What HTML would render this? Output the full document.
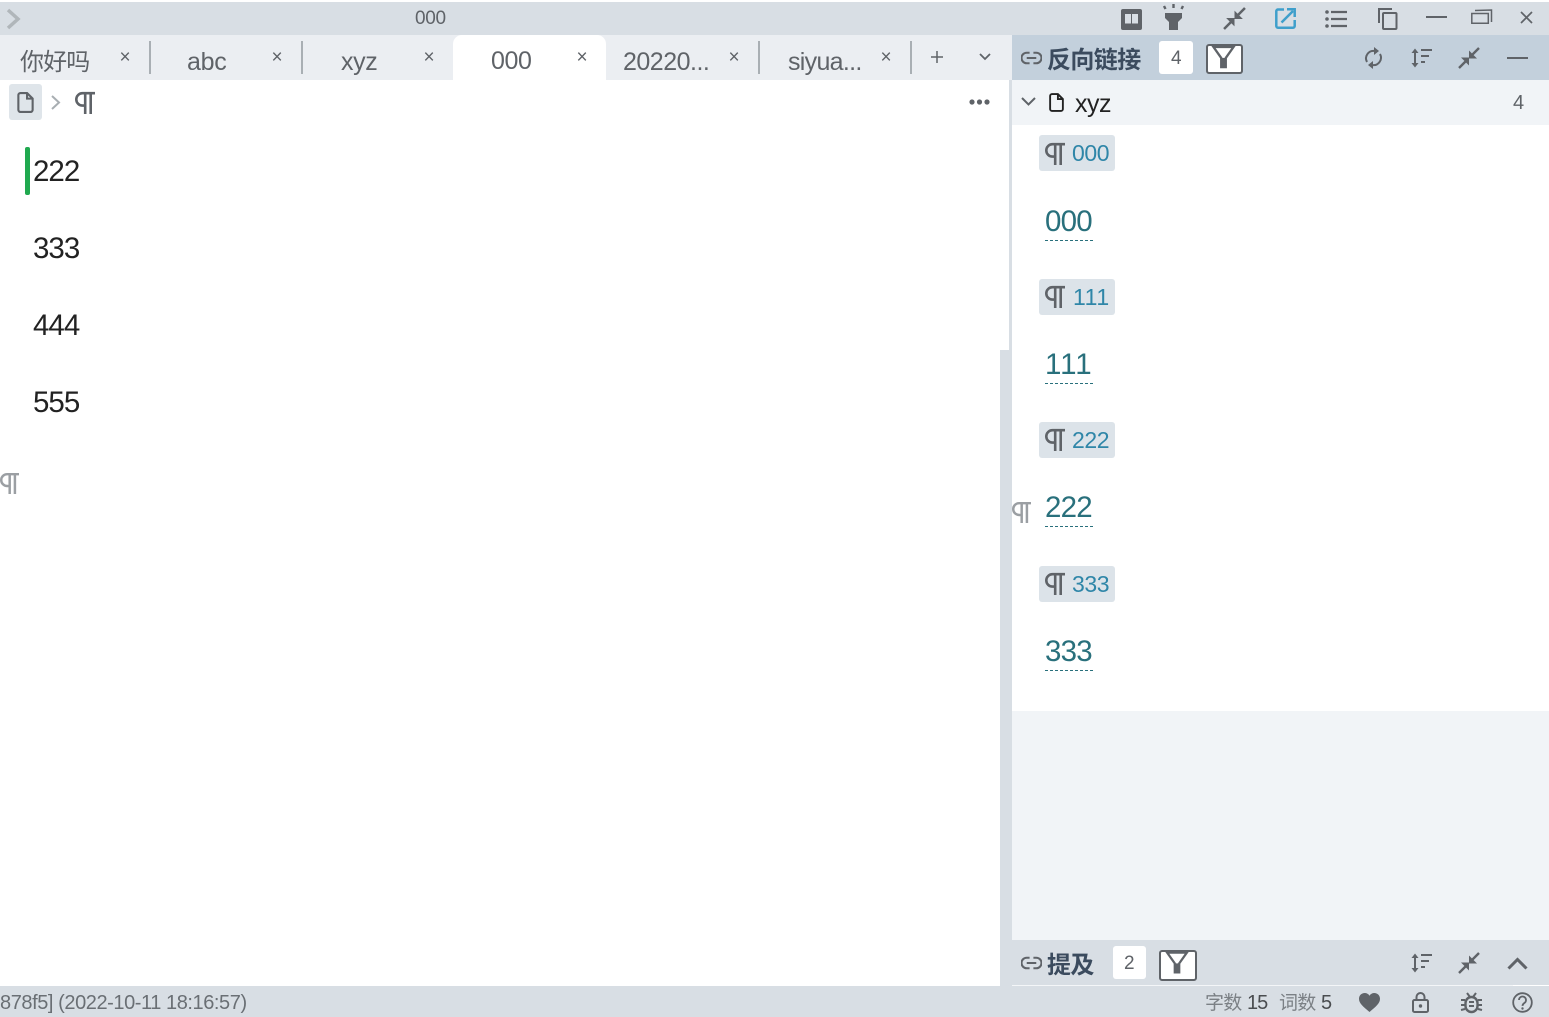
<!DOCTYPE html>
<html><head><meta charset="utf-8"><style>
html,body{margin:0;padding:0;width:1549px;height:1017px;overflow:hidden;background:#fff}
body{position:relative;font-family:"Liberation Sans","Noto Sans CJK SC",sans-serif;color:#5f6368}
.a{position:absolute}
.t{position:absolute;white-space:nowrap;line-height:1}
svg.i{position:absolute;overflow:visible}
.x{position:absolute;font-size:19px;line-height:1;color:#5f6368;width:16px;text-align:center}
.sep{position:absolute;top:41px;width:2px;height:33px;background:#a9afb4}
.chip{position:absolute;left:1039px;width:76px;height:36px;background:#dce3e9;border-radius:3px}
.ct{position:absolute;left:1072px;font-size:23px;line-height:1;color:#2f86a8;white-space:nowrap;letter-spacing:-.4px}
.lk{position:absolute;left:1045px;width:48px;font-size:29.500px;line-height:1;color:#29707c;white-space:nowrap;letter-spacing:-.8px;height:33px;border-bottom:1px dashed #29707c}
.d{position:absolute;left:33px;font-size:29.500px;line-height:1;color:#222;letter-spacing:-1px}
.tab{position:absolute;font-size:25px;line-height:1;white-space:nowrap;color:#5f6368}
</style></head><body>
<svg width="0" height="0" style="position:absolute"><defs>
<symbol id="p" viewBox="0 0 20 24"><path d="M20 2.200H7.500a6.200 6.200 0 0 0 0 12.400H10M10.200 2.200V23M15.700 2.200V23" fill="none" stroke="currentColor" stroke-width="2.600"/></symbol>
<symbol id="cmp" viewBox="0 0 22 22"><path d="M1 21 8 14M21 1l-7 7" fill="none" stroke="currentColor" stroke-width="2.400"/><path d="M3 10.500h8v8zM19 11.500h-8v-8z" fill="currentColor"/></symbol>
<symbol id="srt" viewBox="0 0 22 20"><path d="M4 3v14" fill="none" stroke="currentColor" stroke-width="2"/><path d="M0.500 5 4 0.500 7.500 5zM0.500 15 4 19.500 7.500 15z" fill="currentColor"/><path d="M10 2h11M10 8h8M10 14h4" fill="none" stroke="currentColor" stroke-width="2"/></symbol>
<symbol id="flt" viewBox="0 0 36 28"><path d="M7 3h22L20.500 15v10h-5V15z" fill="none" stroke="#5f6368" stroke-width="2.500"/><path d="M15.500 15h5v10h-5z" fill="#5f6368"/></symbol>
<symbol id="lnk" viewBox="0 0 22 14"><path d="M9 1.500H6a5.500 5.500 0 0 0 0 11h3M13 1.500h3a5.500 5.500 0 0 1 0 11h-3M6 7h10" fill="none" stroke="currentColor" stroke-width="2.200"/></symbol>
<symbol id="doc" viewBox="0 0 16 20"><path d="M1.200 3a2 2 0 0 1 2-2h6.300l5.300 5.300V17a2 2 0 0 1-2 2H3.200a2 2 0 0 1-2-2zM9.500 1v5.300h5.300" fill="none" stroke="currentColor" stroke-width="2"/></symbol>
</defs></svg>

<!-- titlebar -->
<div class="a" style="left:0;top:2px;width:1549px;height:33px;background:#d8dee4"></div>
<svg class="i" style="left:6px;top:8px" width="16" height="22"><path d="M2 2 12 11 2 20" fill="none" stroke="#b0b6ba" stroke-width="3.500"/></svg>
<div class="t" style="left:415px;top:9px;font-size:19px;letter-spacing:-.3px">000</div>

<!-- tabs -->
<div class="a" style="left:0;top:35px;width:1012px;height:45px;background:#ebeef2"></div>
<div class="a" style="left:453px;top:35px;width:153px;height:45px;background:#fff;border-radius:9px 9px 0 0"></div>
<div class="tab" style="left:20px;top:51px;font-size:24px;letter-spacing:-.9px">你好吗</div>
<div class="x" style="left:117px;top:48px">×</div><div class="sep" style="left:149px"></div>
<div class="tab" style="left:187px;top:50px;letter-spacing:-.3px">abc</div>
<div class="x" style="left:269px;top:48px">×</div><div class="sep" style="left:301px"></div>
<div class="tab" style="left:341px;top:50px;letter-spacing:-.4px">xyz</div>
<div class="x" style="left:421px;top:48px">×</div>
<div class="tab" style="left:491px;top:49px;letter-spacing:-.4px">000</div>
<div class="x" style="left:574px;top:48px">×</div>
<div class="tab" style="left:623px;top:50px;letter-spacing:-.5px">20220...</div>
<div class="x" style="left:726px;top:48px">×</div><div class="sep" style="left:758px"></div>
<div class="tab" style="left:788px;top:50px;letter-spacing:-.7px">siyua...</div>
<div class="x" style="left:878px;top:48px">×</div><div class="sep" style="left:910px"></div>
<svg class="i" style="left:931px;top:51px" width="12" height="12"><path d="M6 0v12M0 6h12" stroke="#5f6368" stroke-width="1.500"/></svg>
<svg class="i" style="left:979px;top:53px" width="12" height="8"><path d="M1 1l5 5 5-5" fill="none" stroke="#5f6368" stroke-width="1.800"/></svg>

<!-- breadcrumb -->
<div class="a" style="left:9px;top:84px;width:33px;height:36px;background:#dfe5ea;border-radius:3px"></div>
<svg class="i" style="left:17px;top:92px;color:#5f6368" width="17" height="21"><use href="#doc"/></svg>
<svg class="i" style="left:51px;top:95px" width="10" height="15"><path d="M1 1l7 6.500-7 6.500" fill="none" stroke="#a8aeb2" stroke-width="2"/></svg>
<svg class="i" style="left:75px;top:91px;color:#5f6368" width="20" height="24"><use href="#p"/></svg>
<svg class="i" style="left:969px;top:99px" width="22" height="6"><circle cx="3" cy="3" r="2.600" fill="#5f6368"/><circle cx="10.500" cy="3" r="2.600" fill="#5f6368"/><circle cx="18" cy="3" r="2.600" fill="#5f6368"/></svg>

<!-- editor -->
<div class="a" style="left:25px;top:147px;width:5px;height:48px;background:#20a94f;border-radius:2px"></div>
<div class="d" style="top:157px">222</div>
<div class="d" style="top:234px">333</div>
<div class="d" style="top:311px">444</div>
<div class="d" style="top:388px">555</div>
<svg class="i" style="left:0;top:472px;color:#9b9fa3" width="19" height="23"><use href="#p"/></svg>

<!-- scroll & separator -->
<div class="a" style="left:1009px;top:80px;width:3px;height:270px;background:#d8dee4"></div>
<div class="a" style="left:1000px;top:350px;width:12px;height:636px;background:#d8dee4"></div>

<!-- title icons -->
<svg class="i" style="left:1121px;top:9px" width="21" height="21"><rect width="21" height="21" rx="2" fill="#5f6368"/><path d="M4 5h6v9.500H4zM11 5h6v9.500h-6z" fill="#d8dee4"/></svg>
<svg class="i" style="left:1162px;top:4px" width="23" height="27"><path d="M3 9h17v5l-4 4v8H7v-8l-4-4z" fill="#5f6368"/><path d="M11.500 0v4M2 2l1.500 3M21 2l-1.500 3" stroke="#5f6368" stroke-width="2.400" fill="none"/></svg>
<svg class="i" style="left:1223px;top:7px;color:#5f6368" width="23" height="23"><use href="#cmp"/></svg>
<svg class="i" style="left:1275px;top:8px" width="21" height="21"><path d="M9 1.500H3A1.700 1.700 0 0 0 1.300 3v15A1.700 1.700 0 0 0 3 19.700h15a1.700 1.700 0 0 0 1.700-1.700v-6" fill="none" stroke="#3f9fcb" stroke-width="2.500"/><path d="M6.500 14.500 18 3M12 1.300h7.700V9" fill="none" stroke="#3f9fcb" stroke-width="2.500"/></svg>
<svg class="i" style="left:1325px;top:10px" width="22" height="18"><path d="M6 2h16M6 9h16M6 16h16" stroke="#5f6368" stroke-width="2.200"/><circle cx="2" cy="2" r="1.800" fill="#5f6368"/><circle cx="2" cy="9" r="1.800" fill="#5f6368"/><circle cx="2" cy="16" r="1.800" fill="#5f6368"/></svg>
<svg class="i" style="left:1378px;top:8px" width="20" height="22"><path d="M1 15V1h13" fill="none" stroke="#5f6368" stroke-width="2"/><rect x="5" y="5" width="13.500" height="16" rx="1" fill="none" stroke="#5f6368" stroke-width="2"/></svg>
<div class="a" style="left:1426px;top:16px;width:21px;height:2px;background:#5f6368"></div>
<svg class="i" style="left:1471px;top:9px" width="21" height="16"><path d="M4 1.500 20.500 1v12M.8 4.500h16.500v9.800H.8z" fill="none" stroke="#5f6368" stroke-width="1.500"/></svg>
<svg class="i" style="left:1520px;top:11px" width="13" height="13"><path d="M1 1l11 11M12 1 1 12" stroke="#5f6368" stroke-width="1.700"/></svg>

<!-- backlink header -->
<div class="a" style="left:1012px;top:35px;width:537px;height:45px;background:#c3d0dc"></div>
<svg class="i" style="left:1021px;top:51px;color:#5f6368" width="21" height="14"><use href="#lnk"/></svg>
<div class="t" style="left:1047px;top:46px;font-size:24px;font-weight:700;color:#3b4b5e;letter-spacing:-.6px;font-family:'Noto Sans CJK SC',sans-serif">反向链接</div>
<div class="a" style="left:1159px;top:41px;width:34px;height:33px;background:#fff;border-radius:3px"></div>
<div class="t" style="left:1171px;top:49px;font-size:19px">4</div>
<div class="a" style="left:1206px;top:44px;width:33px;height:26px;background:#fff;border:2px solid #5f6368;border-radius:3px"></div>
<svg class="i" style="left:1207px;top:44px" width="33" height="26"><use href="#flt"/></svg>
<svg class="i" style="left:1364px;top:47px" width="19" height="22"><path d="M3 15A7.500 7.500 0 0 1 11 4M16 7a7.500 7.500 0 0 1-8 11" fill="none" stroke="#5f6368" stroke-width="2"/><path d="M10 0v8l5-4zM9 14v8l-5-4z" fill="#5f6368"/></svg>
<svg class="i" style="left:1411px;top:48px;color:#5f6368" width="22" height="20"><use href="#srt"/></svg>
<svg class="i" style="left:1458px;top:47px;color:#5f6368" width="22" height="22"><use href="#cmp"/></svg>
<div class="a" style="left:1507px;top:57px;width:21px;height:2px;background:#5f6368"></div>

<!-- doc row -->
<div class="a" style="left:1012px;top:80px;width:537px;height:45px;background:#f1f4f7"></div>
<svg class="i" style="left:1021px;top:97px" width="15" height="10"><path d="M1 1l6.500 6.500L14 1" fill="none" stroke="#5f6368" stroke-width="2"/></svg>
<svg class="i" style="left:1049px;top:93px;color:#222" width="15" height="19"><use href="#doc"/></svg>
<div class="t" style="left:1075px;top:92px;font-size:25px;color:#222;letter-spacing:-.5px">xyz</div>
<div class="t" style="left:1513px;top:93px;font-size:20px">4</div>

<!-- backlinks -->
<div class="a" style="left:1012px;top:711px;width:537px;height:229px;background:#f1f4f7"></div>

<div class="chip" style="top:135px"></div>
<svg class="i" style="left:1045px;top:142px;color:#5f6368" width="20" height="24"><use href="#p"/></svg>
<div class="ct" style="top:142px">000</div>
<div class="lk" style="top:207px">000</div>

<div class="chip" style="top:279px"></div>
<svg class="i" style="left:1045px;top:285px;color:#5f6368" width="20" height="24"><use href="#p"/></svg>
<div class="ct" style="top:286px;left:1073px;letter-spacing:.6px">111</div>
<div class="lk" style="top:350px;letter-spacing:.9px">111</div>

<div class="chip" style="top:422px"></div>
<svg class="i" style="left:1045px;top:428px;color:#5f6368" width="20" height="24"><use href="#p"/></svg>
<div class="ct" style="top:429px">222</div>
<svg class="i" style="left:1012px;top:501px;color:#9b9fa3" width="19" height="23"><use href="#p"/></svg>
<div class="lk" style="top:493px">222</div>

<div class="chip" style="top:566px"></div>
<svg class="i" style="left:1045px;top:572px;color:#5f6368" width="20" height="24"><use href="#p"/></svg>
<div class="ct" style="top:573px">333</div>
<div class="lk" style="top:637px">333</div>

<!-- mention header -->
<div class="a" style="left:1012px;top:940px;width:537px;height:45px;background:#d8dee4"></div>
<svg class="i" style="left:1021px;top:956px;color:#5f6368" width="21" height="14"><use href="#lnk"/></svg>
<div class="t" style="left:1047px;top:951px;font-size:24px;font-weight:700;color:#3b4b5e;letter-spacing:-.6px;font-family:'Noto Sans CJK SC',sans-serif">提及</div>
<div class="a" style="left:1113px;top:946px;width:33px;height:33px;background:#fff;border-radius:3px"></div>
<div class="t" style="left:1124px;top:954px;font-size:19px">2</div>
<div class="a" style="left:1159px;top:950px;width:34px;height:27px;background:#fff;border:2px solid #5f6368;border-radius:3px"></div>
<svg class="i" style="left:1160px;top:950px" width="34" height="25"><use href="#flt"/></svg>
<svg class="i" style="left:1411px;top:953px;color:#5f6368" width="22" height="20"><use href="#srt"/></svg>
<svg class="i" style="left:1458px;top:952px;color:#5f6368" width="22" height="22"><use href="#cmp"/></svg>
<svg class="i" style="left:1507px;top:957px" width="21" height="13"><path d="M1.500 11.500 10.500 2.500 19.500 11.500" fill="none" stroke="#5f6368" stroke-width="3"/></svg>

<!-- status bar -->
<div class="a" style="left:0;top:986px;width:1549px;height:31px;background:#d8dee4"></div>
<div class="a" style="left:1012px;top:985px;width:501px;height:1px;background:#f4f6f8"></div>
<div class="t" style="left:0;top:993px;font-size:20px;color:#6a6f74;letter-spacing:-.43px">878f5] (2022-10-11 18:16:57)</div>
<div class="t" style="left:1205px;top:994px;font-size:19px;color:#7b8085;letter-spacing:-.8px">字数</div>
<div class="t" style="left:1247px;top:993px;font-size:20px;color:#4a4d50;letter-spacing:-1px">15</div>
<div class="t" style="left:1279px;top:994px;font-size:19px;color:#7b8085;letter-spacing:-.8px">词数</div>
<div class="t" style="left:1321px;top:993px;font-size:20px;color:#4a4d50">5</div>
<svg class="i" style="left:1359px;top:993px" width="21" height="19"><path d="M10.500 19C4 13.500 0 10.500 0 5.800 0 2.500 2.500 0 5.700 0c2 0 3.800 1 4.800 2.700C11.500 1 13.300 0 15.300 0 18.500 0 21 2.500 21 5.800c0 4.700-4 7.700-10.500 13.200z" fill="#5f6368"/></svg>
<svg class="i" style="left:1412px;top:992px" width="17" height="21"><rect x="1" y="8" width="15" height="12" rx="1.500" fill="none" stroke="#5f6368" stroke-width="2"/><path d="M4.500 8V5a4 4 0 0 1 8 0v3" fill="none" stroke="#5f6368" stroke-width="2"/><circle cx="8.500" cy="14" r="1.700" fill="#5f6368"/></svg>
<svg class="i" style="left:1461px;top:992px" width="21" height="22"><path d="M6 1l3 4M15 1l-3 4M0 8h4M21 8h-4M0 13h4M21 13h-4M0 18l4-1M21 18l-4-1" stroke="#5f6368" stroke-width="2" fill="none"/><rect x="4.500" y="5" width="12" height="15" rx="6" fill="none" stroke="#5f6368" stroke-width="2.400"/><path d="M8 10h5M8 14h5" stroke="#5f6368" stroke-width="2"/></svg>
<svg class="i" style="left:1512px;top:992px" width="21" height="21"><circle cx="10.500" cy="10.500" r="9.300" fill="none" stroke="#5f6368" stroke-width="1.800"/><path d="M7 8a3.500 3.500 0 1 1 5.500 2.900c-1.300.9-2 1.500-2 3" fill="none" stroke="#5f6368" stroke-width="1.800"/><circle cx="10.500" cy="16.500" r="1.200" fill="#5f6368"/></svg>
</body></html>
